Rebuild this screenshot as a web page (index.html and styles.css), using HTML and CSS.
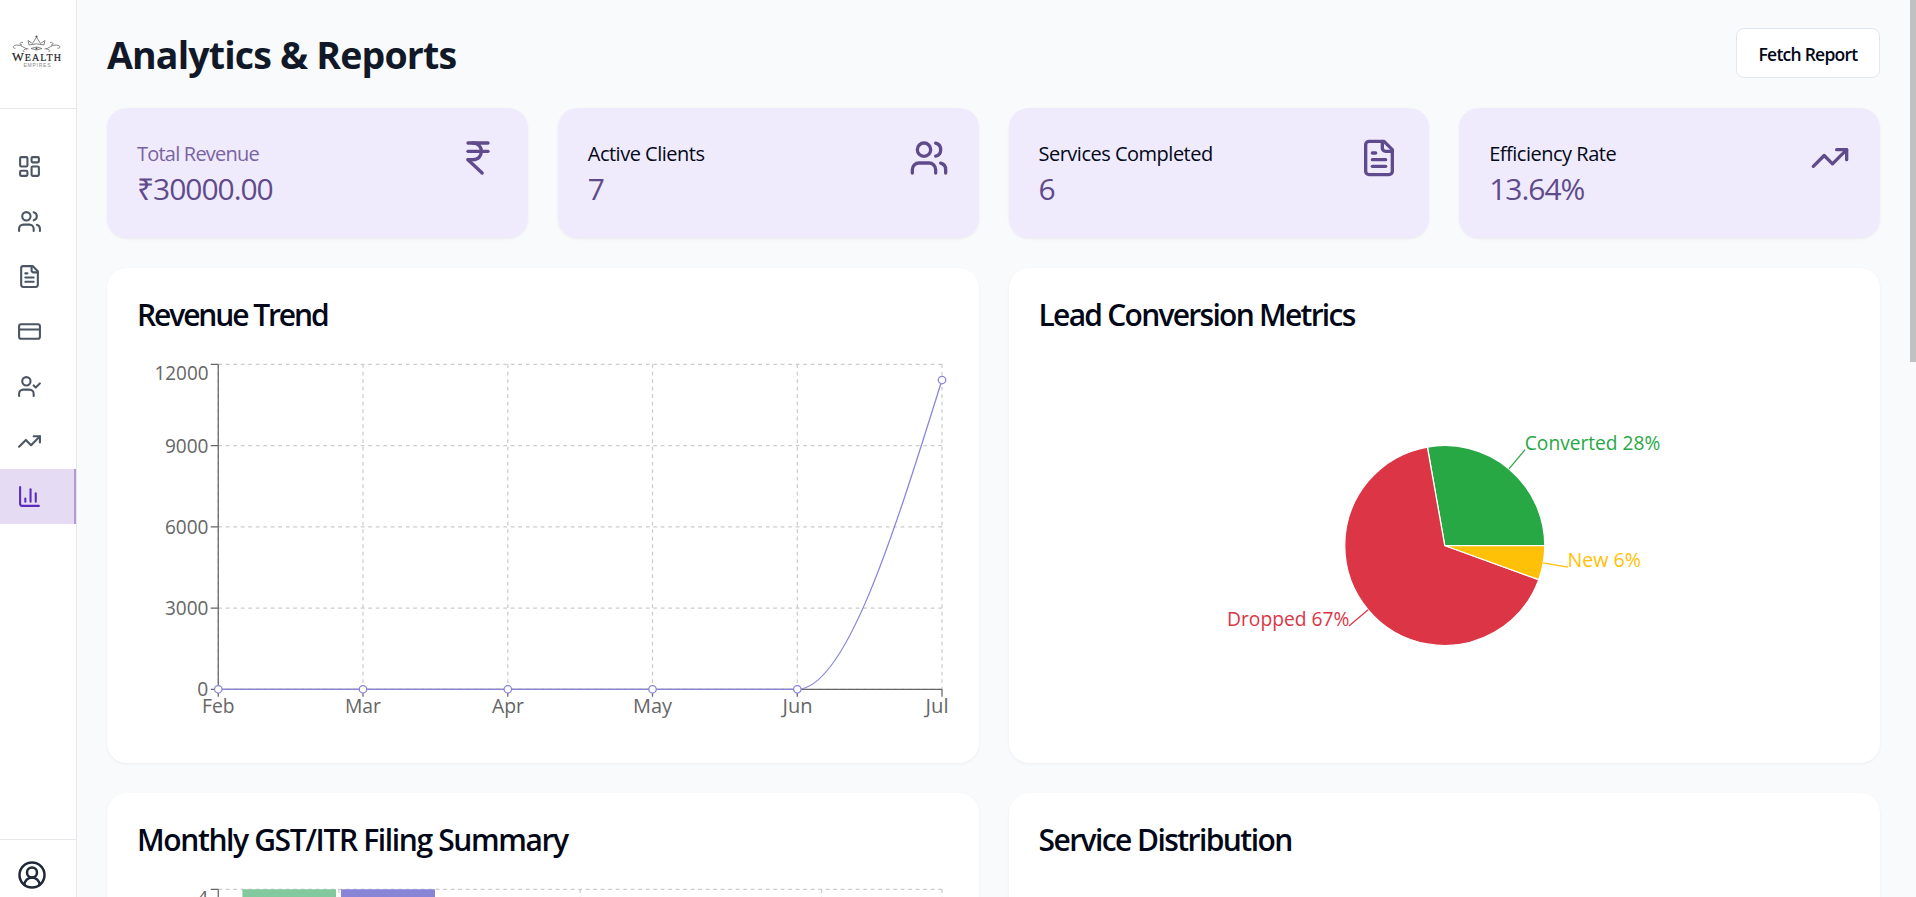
FILE: index.html
```html
<!DOCTYPE html>
<html lang="en">
<head>
<meta charset="utf-8">
<title>Analytics &amp; Reports</title>
<link rel="stylesheet" href="styles.css">
</head>
<body>
<div class="app">
  <aside class="sidebar">
    <div class="brand">
      <svg class="logo" viewBox="0 0 52 36" width="52" height="36">
        <g class="logo-lines">
          <path d="M18 11 L17 6.500 L21.500 9.500 L25.500 3 L29.500 9.500 L34 6.500 L33 11 Q25.500 8.500 18 11"/>
          <path d="M20 14.500 Q25.500 11.500 31 14.500 Q25.500 17.500 20 14.500"/>
          <path d="M17.500 15 C13 15 11 10.500 5.500 11 C1 11.300 1.500 15 4.500 14.200"/>
          <path d="M33.500 15 C38 15 40 10.500 45.500 11 C50 11.300 49.500 15 46.500 14.200"/>
          <path d="M12 8.500 C8.500 7.500 8 11.500 11 11 M39 8.500 C42.500 7.500 43 11.500 40 11"/>
          <path d="M16 15 C12 15 11 18 13.500 17.500 M35 15 C39 15 40 18 37.500 17.500"/>
        </g>
        <circle class="logo-dot" cx="25.500" cy="2.500" r="1"/>
        <circle class="logo-dot" cx="25.500" cy="14.500" r="1"/>
        <text class="logo-name" x="1" y="27.300" textLength="49"><tspan class="logo-cap">W</tspan>EALTH</text>
        <text class="logo-sub" x="12.500" y="32.800" textLength="27">EMPIRES</text>
      </svg>
    </div>
    <nav class="nav">
      <a class="nav-item"><svg class="icon" viewBox="0 0 24 24"><rect width="7" height="9" x="3" y="3" rx="1"/><rect width="7" height="5" x="14" y="3" rx="1"/><rect width="7" height="9" x="14" y="12" rx="1"/><rect width="7" height="5" x="3" y="16" rx="1"/></svg></a>
      <a class="nav-item"><svg class="icon" viewBox="0 0 24 24"><path d="M16 21v-2a4 4 0 0 0-4-4H6a4 4 0 0 0-4 4v2"/><circle cx="9" cy="7" r="4"/><path d="M22 21v-2a4 4 0 0 0-3-3.870"/><path d="M16 3.130a4 4 0 0 1 0 7.750"/></svg></a>
      <a class="nav-item"><svg class="icon" viewBox="0 0 24 24"><path d="M15 2H6a2 2 0 0 0-2 2v16a2 2 0 0 0 2 2h12a2 2 0 0 0 2-2V7Z"/><path d="M14 2v4a2 2 0 0 0 2 2h4"/><path d="M10 9H8"/><path d="M16 13H8"/><path d="M16 17H8"/></svg></a>
      <a class="nav-item"><svg class="icon" viewBox="0 0 24 24"><rect width="20" height="14" x="2" y="5" rx="2"/><path d="M2 10h20"/></svg></a>
      <a class="nav-item"><svg class="icon" viewBox="0 0 24 24"><path d="M16 21v-2a4 4 0 0 0-4-4H6a4 4 0 0 0-4 4v2"/><circle cx="9" cy="7" r="4"/><path d="m16 11 2 2 4-4"/></svg></a>
      <a class="nav-item"><svg class="icon" viewBox="0 0 24 24"><path d="M22 7 13.500 15.500 8.500 10.500 2 17"/><path d="M16 7h6v6"/></svg></a>
      <a class="nav-item active"><svg class="icon" viewBox="0 0 24 24"><path d="M3 3v16a2 2 0 0 0 2 2h16"/><path d="M18 17V9"/><path d="M13 17V5"/><path d="M8 17v-3"/></svg></a>
    </nav>
    <div class="account">
      <svg class="icon icon-account" viewBox="0 0 24 24"><path d="M18 20a6 6 0 0 0-12 0"/><circle cx="12" cy="10" r="4"/><circle cx="12" cy="12" r="10"/></svg>
    </div>
  </aside>

  <main class="main">
    <header class="header">
      <h1 class="title">Analytics &amp; Reports</h1>
      <button class="button">Fetch Report</button>
    </header>

    <section class="stats">
      <article class="stat">
        <div class="stat-text"><div class="stat-label muted">Total Revenue</div><div class="stat-value">₹30000.00</div></div>
        <svg class="icon icon-stat" viewBox="0 0 24 24"><path d="M6 3h12"/><path d="M6 8h12"/><path d="m6 13 8.500 8"/><path d="M6 13h3"/><path d="M9 13c6.667 0 6.667-10 0-10"/></svg>
      </article>
      <article class="stat">
        <div class="stat-text"><div class="stat-label">Active Clients</div><div class="stat-value">7</div></div>
        <svg class="icon icon-stat" viewBox="0 0 24 24"><path d="M16 21v-2a4 4 0 0 0-4-4H6a4 4 0 0 0-4 4v2"/><circle cx="9" cy="7" r="4"/><path d="M22 21v-2a4 4 0 0 0-3-3.870"/><path d="M16 3.130a4 4 0 0 1 0 7.750"/></svg>
      </article>
      <article class="stat">
        <div class="stat-text"><div class="stat-label">Services Completed</div><div class="stat-value">6</div></div>
        <svg class="icon icon-stat" viewBox="0 0 24 24"><path d="M15 2H6a2 2 0 0 0-2 2v16a2 2 0 0 0 2 2h12a2 2 0 0 0 2-2V7Z"/><path d="M14 2v4a2 2 0 0 0 2 2h4"/><path d="M10 9H8"/><path d="M16 13H8"/><path d="M16 17H8"/></svg>
      </article>
      <article class="stat">
        <div class="stat-text"><div class="stat-label">Efficiency Rate</div><div class="stat-value">13.64%</div></div>
        <svg class="icon icon-stat" viewBox="0 0 24 24"><path d="M22 7 13.500 15.500 8.500 10.500 2 17"/><path d="M16 7h6v6"/></svg>
      </article>
    </section>

    <section class="charts">
      <article class="card">
        <h2 class="card-title t-revenue">Revenue Trend</h2>
        <svg class="chart" viewBox="137 358 812 375" width="812" height="375">
          <g class="grid">
            <path d="M218.250 364.250H942.250M218.250 445.500H942.250M218.250 526.750H942.250M218.250 608H942.250M218.250 689.250H942.250"/>
            <path d="M218.250 364.250V689.250M363 364.250V689.250M507.800 364.250V689.250M652.500 364.250V689.250M797.300 364.250V689.250M942 364.250V689.250"/>
          </g>
          <g class="axis">
            <path d="M218.250 364.250V689.250M210.750 364.250H218.250M210.750 445.500H218.250M210.750 526.750H218.250M210.750 608H218.250M210.750 689.250H218.250"/>
            <path d="M218.250 689.250H942.250M218.250 689.250V696.750M363 689.250V696.750M507.800 689.250V696.750M652.500 689.250V696.750M797.300 689.250V696.750M942 689.250V696.750"/>
          </g>
          <g class="tick">
            <text x="154.500" y="380" textLength="54" lengthAdjust="spacingAndGlyphs">12000</text>
            <text x="165" y="452.700" textLength="43.500" lengthAdjust="spacingAndGlyphs">9000</text>
            <text x="165" y="534" textLength="43.500" lengthAdjust="spacingAndGlyphs">6000</text>
            <text x="165" y="615" textLength="43.500" lengthAdjust="spacingAndGlyphs">3000</text>
            <text x="197.300" y="696" textLength="11" lengthAdjust="spacingAndGlyphs">0</text>
            <text x="202" y="713" textLength="32.500" lengthAdjust="spacingAndGlyphs">Feb</text>
            <text x="345" y="713" textLength="36" lengthAdjust="spacingAndGlyphs">Mar</text>
            <text x="492" y="713" textLength="32" lengthAdjust="spacingAndGlyphs">Apr</text>
            <text x="633" y="713" textLength="39" lengthAdjust="spacingAndGlyphs">May</text>
            <text x="782.500" y="713" textLength="30" lengthAdjust="spacingAndGlyphs">Jun</text>
            <text x="925.500" y="713" textLength="23" lengthAdjust="spacingAndGlyphs">Jul</text>
          </g>
          <g class="series">
            <path d="M218.250 689.250H797.300C845.600 689.250 893.700 534.600 942 380"/>
            <circle cx="218.250" cy="689.250" r="3.750"/><circle cx="363" cy="689.250" r="3.750"/><circle cx="507.800" cy="689.250" r="3.750"/><circle cx="652.500" cy="689.250" r="3.750"/><circle cx="797.300" cy="689.250" r="3.750"/><circle cx="942" cy="380" r="3.750"/>
          </g>
        </svg>
      </article>

      <article class="card">
        <h2 class="card-title t-lead">Lead Conversion Metrics</h2>
        <svg class="chart" viewBox="1038.500 358 812 375" width="812" height="375">
          <g class="pie">
            <path class="green" d="M1444.250 545.500L1544.250 545.500A100 100 0 0 0 1426.890 447.020Z"/>
            <path class="red" d="M1444.250 545.500L1426.890 447.020A100 100 0 1 0 1538.220 579.700Z"/>
            <path class="yellow" d="M1444.250 545.500L1538.220 579.700A100 100 0 0 0 1544.250 545.500Z"/>
          </g>
          <g class="leader">
            <path class="green-line" d="M1508.500 468.900L1524.600 449.700"/>
            <path class="red-line" d="M1367.600 609.800L1348.500 625.900"/>
            <path class="yellow-line" d="M1542.700 562.900L1567.300 567.200"/>
          </g>
          <g class="label">
            <text class="green" x="1524.300" y="450" textLength="135.500" lengthAdjust="spacingAndGlyphs">Converted 28%</text>
            <text class="red" x="1226.500" y="626" textLength="122.500" lengthAdjust="spacingAndGlyphs">Dropped 67%</text>
            <text class="yellow" x="1567" y="567" textLength="73.500" lengthAdjust="spacingAndGlyphs">New 6%</text>
          </g>
        </svg>
      </article>

      <article class="card">
        <h2 class="card-title t-filing">Monthly GST/ITR Filing Summary</h2>
        <svg class="chart" viewBox="137 883 812 375" width="812" height="375">
          <g class="grid">
            <path d="M218.250 889.250H942.250"/>
            <path d="M338.900 889.250V1214M580.200 889.250V1214M821.600 889.250V1214M942 889.250V1214"/>
          </g>
          <g class="axis"><path d="M218.250 889.250V1214M210.750 889.250H218.250"/></g>
          <g class="tick"><text x="197.300" y="905" textLength="11" lengthAdjust="spacingAndGlyphs">4</text></g>
          <rect class="bar-green" x="242.400" y="889.250" width="93.600" height="325"/>
          <rect class="bar-purple" x="341" y="889.250" width="94" height="325"/>
        </svg>
      </article>

      <article class="card">
        <h2 class="card-title t-service">Service Distribution</h2>
      </article>
    </section>
  </main>

  <div class="scrollbar"><div class="thumb"></div></div>
</div>
</body>
</html>
```
FILE: styles.css
```css
* { box-sizing: border-box; }

body {
  margin: 0;
  height: 897px;
  overflow: hidden;
  background: #f9fafc;
  color: #020817;
  font-family: "Open Sans", "Noto Sans", sans-serif;
}

.app { display: flex; height: 897px; overflow: hidden; }

.sidebar {
  display: flex;
  flex-direction: column;
  flex: none;
  width: 77px;
  background: #fff;
  border-right: 1px solid #e5e7eb;
}

.brand { height: 109px; padding: 34px 0 0 11px; border-bottom: 1px solid #e5e7eb; }
.logo { display: block; }
.logo-lines path { fill: none; stroke: #777; stroke-width: 0.9; }
.logo-dot { fill: #444; }
.logo-name { font: 10px "Liberation Serif", serif; fill: #222; stroke: #222; stroke-width: 0.2; }
.logo-cap { font-size: 12.5px; }
.logo-sub { font: 5px "Liberation Sans", sans-serif; fill: #888; }

.nav { flex: 1; padding-top: 30px; }
.nav-item { display: flex; align-items: center; height: 55px; padding-left: 17px; color: #4b5563; }
.nav-item.active { background: #e5dbf3; border-right: 2px solid #b29bd3; color: #5b2abf; }

.account { height: 58px; padding: 20px 0 0 17px; border-top: 1px solid #e5e7eb; color: #1f2937; }

.icon {
  display: block;
  flex: none;
  width: 25px;
  height: 25px;
  fill: none;
  stroke: currentColor;
  stroke-width: 2;
  stroke-linecap: round;
  stroke-linejoin: round;
}
.icon-account { width: 30px; height: 30px; }
.icon-stat { width: 40px; height: 40px; color: #5f4b8b; }

.main { flex: 1; min-width: 0; padding: 28px 30px 0; }

.header { display: flex; justify-content: space-between; align-items: center; height: 50px; margin-bottom: 30px; }
.title { margin: 0; padding-top: 3px; font-size: 37.5px; line-height: 50px; font-weight: 700; letter-spacing: -0.83px; color: #111827; white-space: nowrap; }
.button {
  width: 144px;
  height: 50px;
  padding: 2px 0 0;
  border: 1px solid #e2e8f0;
  border-radius: 8px;
  background: #fff;
  color: #020817;
  font: 600 17.5px "Open Sans", "Noto Sans", sans-serif;
  letter-spacing: -0.75px;
  white-space: nowrap;
}

.stats { display: grid; grid-template-columns: repeat(4, 1fr); gap: 30px; margin-bottom: 30px; }
.stat {
  display: flex;
  justify-content: space-between;
  height: 130px;
  padding: 30px;
  border-radius: 20px;
  background: #f0ebfc;
  box-shadow: 0 1px 3px rgba(0, 0, 0, 0.06);
}
.stat-text { padding-top: 1px; }
.stat-label { font-size: 20px; line-height: 30px; letter-spacing: -0.5px; white-space: nowrap; }
.stat-label.muted { color: #7864a2; letter-spacing: -0.78px; }
.stat-value { font-size: 30px; line-height: 40px; letter-spacing: -1.05px; color: #5f4b8b; }

.charts { display: grid; grid-template-columns: repeat(2, 1fr); gap: 30px; }
.card {
  min-width: 0;
  height: 495px;
  padding: 30px 30px 0;
  border-radius: 20px;
  background: #fff;
  box-shadow: 0 1px 3px rgba(0, 0, 0, 0.06);
}
.card-title { margin: 0; height: 60px; font-size: 30px; line-height: 33px; font-weight: 600; white-space: nowrap; }
.t-revenue { letter-spacing: -2.1px; }
.t-lead { letter-spacing: -1.73px; }
.t-filing { letter-spacing: -1.37px; }
.t-service { letter-spacing: -1.57px; }
.chart { display: block; overflow: visible; }

.grid path { fill: none; stroke: #ccc; stroke-width: 1.25; stroke-dasharray: 3.75 3.75; }
.axis path { fill: none; stroke: #666; stroke-width: 1.25; }
.tick text { font-size: 20px; fill: #666; }
.series path { fill: none; stroke: #8884d8; stroke-width: 1.25; }
.series circle { fill: #fff; stroke: #8884d8; stroke-width: 1.25; }

.pie path { stroke: #fff; stroke-width: 1.25; }
.green { fill: #28a745; }
.red { fill: #dc3545; }
.yellow { fill: #ffc107; }
.leader path { fill: none; stroke-width: 1.25; }
.leader .green-line { stroke: #28a745; }
.leader .red-line { stroke: #dc3545; }
.leader .yellow-line { stroke: #ffc107; }
.label text { font-size: 20px; }

.bar-green { fill: #82ca9d; }
.bar-purple { fill: #8884d8; }

.scrollbar { flex: none; width: 6px; }
.thumb { height: 362px; background: #c1c1c1; }
```
